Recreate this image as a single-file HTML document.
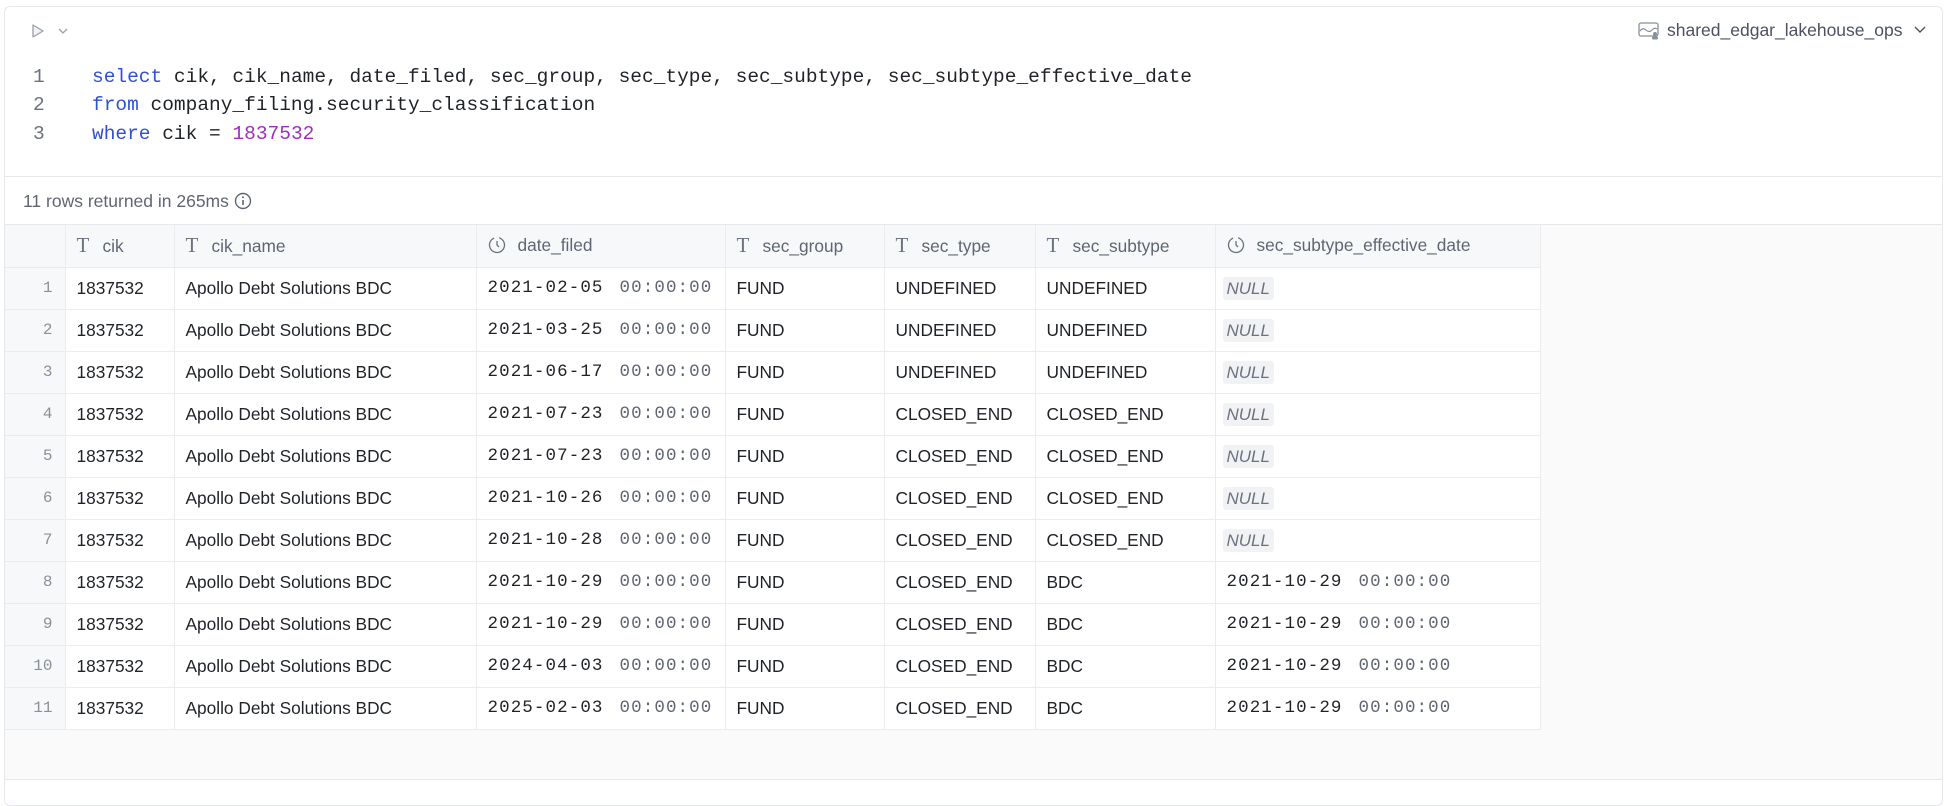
<!DOCTYPE html>
<html><head><meta charset="utf-8"><style>
*{box-sizing:border-box;margin:0;padding:0}
body{width:1946px;height:789px;background:#fff;font-family:"Liberation Sans",sans-serif;position:relative;overflow:hidden}
.card{position:absolute;left:4px;top:6px;width:1939px;height:800px;border:1px solid #e6e8eb;border-radius:6px;background:#fff}
.mono{font-family:"Liberation Mono",monospace}
.code{position:absolute;left:0;top:59px;font-size:19.5px;color:#1f2328}
.ln{position:absolute;left:28px;color:#6b7280;width:20px}
.cl{position:absolute;left:87px;white-space:pre}
.kw{color:#2f4fd6}.num{color:#a02ec0}
.sep{position:absolute;left:0;right:0;top:169px;border-top:1px solid #e6e8eb}
.info{position:absolute;left:18px;top:184px;font-size:17.5px;color:#5f6673}
.res{position:absolute;left:0;right:0;top:217px;height:556px;background:#fafafa;border-top:1px solid #e6e8eb;border-bottom:1px solid #e6e8eb}
table{position:absolute;left:0;top:0;border-collapse:collapse;background:#fff;font-size:17.3px;color:#1f2328}
td,th{border:1px solid #ececee;height:42px;padding:0 0 0 11px;text-align:left;white-space:nowrap;font-weight:normal}
th{background:#f7f8fa;color:#5f6673;height:42px;border-top:none}
tr td:first-child,tr th:first-child{border-left:none;background:#f7f8fa;color:#8a909a;text-align:right;padding:0 12px 0 0;font-family:"Liberation Mono",monospace;font-size:16px}
.t{font-family:"Liberation Serif",serif;font-size:21px;color:#6b7280;margin-right:14px;display:inline-block;width:12px}
.d{font-family:"Liberation Mono",monospace;font-size:17.5px;letter-spacing:1.1px}
.d span{color:#5f6673;margin-left:16px}
.null{background:#f1f2f4;color:#6b7280;font-style:italic;padding:2px 4px;border-radius:3px;font-size:17px;margin-left:-4px}
.clk{display:inline-block;vertical-align:-3px;margin-right:12px}
</style></head><body>
<div class="card">
<svg style="position:absolute;left:25px;top:16px" width="16" height="16" viewBox="0 0 16 16"><path d="M3 2 L13 8 L3 14 Z" fill="#f1f2f4" stroke="#9aa0a8" stroke-width="1.3" stroke-linejoin="round"/></svg>
<svg style="position:absolute;left:53px;top:21px" width="10" height="7" viewBox="0 0 10 7"><path d="M1 1 L5 5 L9 1" fill="none" stroke="#9aa0a8" stroke-width="1.3"/></svg>
<svg style="position:absolute;left:1633px;top:15px" width="22" height="18" viewBox="0 0 22 18"><rect x="1" y="1" width="19" height="13" rx="2" fill="none" stroke="#8a909a" stroke-width="1.3"/><path d="M2 9 Q5 5 8 8 T14 8 T19 7" fill="none" stroke="#8a909a" stroke-width="1.2"/><circle cx="17" cy="12" r="2" fill="#8a909a"/><rect x="14" y="14.5" width="6" height="3" rx="1.2" fill="#8a909a"/></svg>
<div style="position:absolute;left:1662px;top:13px;font-size:17.5px;color:#4b5260">shared_edgar_lakehouse_ops</div>
<svg style="position:absolute;left:1909px;top:19px" width="12" height="8" viewBox="0 0 12 8"><path d="M1 1 L6 6 L11 1" fill="none" stroke="#4b5260" stroke-width="1.4"/></svg>
<div class="code mono">
<div class="ln" style="top:0">1</div><div class="cl" style="top:0"><span class="kw">select</span> cik, cik_name, date_filed, sec_group, sec_type, sec_subtype, sec_subtype_effective_date</div>
<div class="ln" style="top:28px">2</div><div class="cl" style="top:28px"><span class="kw">from</span> company_filing.security_classification</div>
<div class="ln" style="top:57px">3</div><div class="cl" style="top:57px"><span class="kw">where</span> cik = <span class="num">1837532</span></div>
</div>
<div class="sep"></div>
<div class="info">11 rows returned in 265ms <svg style="vertical-align:-3px" width="18" height="18" viewBox="0 0 18 18"><circle cx="9" cy="9" r="7.5" fill="none" stroke="#5f6673" stroke-width="1.4"/><path d="M9 8v5" stroke="#5f6673" stroke-width="1.6"/><circle cx="9" cy="5.3" r="1" fill="#5f6673"/></svg></div>
<div class="res">
<table>
<colgroup><col style="width:60px"><col style="width:109px"><col style="width:302px"><col style="width:249px"><col style="width:159px"><col style="width:151px"><col style="width:180px"><col style="width:325px"></colgroup>
<tr><th></th><th><span class="t">T</span>cik</th><th><span class="t">T</span>cik_name</th><th><svg class="clk" width="18" height="18" viewBox="0 0 18 18"><circle cx="9" cy="9" r="7.5" fill="none" stroke="#6b7280" stroke-width="1.3" stroke-dasharray="40 5" transform="rotate(-60 9 9)"/><path d="M9 5v4l2 2" fill="none" stroke="#6b7280" stroke-width="1.3"/></svg>date_filed</th><th><span class="t">T</span>sec_group</th><th><span class="t">T</span>sec_type</th><th><span class="t">T</span>sec_subtype</th><th><svg class="clk" width="18" height="18" viewBox="0 0 18 18"><circle cx="9" cy="9" r="7.5" fill="none" stroke="#6b7280" stroke-width="1.3" stroke-dasharray="40 5" transform="rotate(-60 9 9)"/><path d="M9 5v4l2 2" fill="none" stroke="#6b7280" stroke-width="1.3"/></svg>sec_subtype_effective_date</th></tr>
<tr><td>1</td><td>1837532</td><td>Apollo Debt Solutions BDC</td><td class="d">2021-02-05<span>00:00:00</span></td><td>FUND</td><td>UNDEFINED</td><td>UNDEFINED</td><td><span class="null">NULL</span></td></tr>
<tr><td>2</td><td>1837532</td><td>Apollo Debt Solutions BDC</td><td class="d">2021-03-25<span>00:00:00</span></td><td>FUND</td><td>UNDEFINED</td><td>UNDEFINED</td><td><span class="null">NULL</span></td></tr>
<tr><td>3</td><td>1837532</td><td>Apollo Debt Solutions BDC</td><td class="d">2021-06-17<span>00:00:00</span></td><td>FUND</td><td>UNDEFINED</td><td>UNDEFINED</td><td><span class="null">NULL</span></td></tr>
<tr><td>4</td><td>1837532</td><td>Apollo Debt Solutions BDC</td><td class="d">2021-07-23<span>00:00:00</span></td><td>FUND</td><td>CLOSED_END</td><td>CLOSED_END</td><td><span class="null">NULL</span></td></tr>
<tr><td>5</td><td>1837532</td><td>Apollo Debt Solutions BDC</td><td class="d">2021-07-23<span>00:00:00</span></td><td>FUND</td><td>CLOSED_END</td><td>CLOSED_END</td><td><span class="null">NULL</span></td></tr>
<tr><td>6</td><td>1837532</td><td>Apollo Debt Solutions BDC</td><td class="d">2021-10-26<span>00:00:00</span></td><td>FUND</td><td>CLOSED_END</td><td>CLOSED_END</td><td><span class="null">NULL</span></td></tr>
<tr><td>7</td><td>1837532</td><td>Apollo Debt Solutions BDC</td><td class="d">2021-10-28<span>00:00:00</span></td><td>FUND</td><td>CLOSED_END</td><td>CLOSED_END</td><td><span class="null">NULL</span></td></tr>
<tr><td>8</td><td>1837532</td><td>Apollo Debt Solutions BDC</td><td class="d">2021-10-29<span>00:00:00</span></td><td>FUND</td><td>CLOSED_END</td><td>BDC</td><td class="d">2021-10-29<span>00:00:00</span></td></tr>
<tr><td>9</td><td>1837532</td><td>Apollo Debt Solutions BDC</td><td class="d">2021-10-29<span>00:00:00</span></td><td>FUND</td><td>CLOSED_END</td><td>BDC</td><td class="d">2021-10-29<span>00:00:00</span></td></tr>
<tr><td>10</td><td>1837532</td><td>Apollo Debt Solutions BDC</td><td class="d">2024-04-03<span>00:00:00</span></td><td>FUND</td><td>CLOSED_END</td><td>BDC</td><td class="d">2021-10-29<span>00:00:00</span></td></tr>
<tr><td>11</td><td>1837532</td><td>Apollo Debt Solutions BDC</td><td class="d">2025-02-03<span>00:00:00</span></td><td>FUND</td><td>CLOSED_END</td><td>BDC</td><td class="d">2021-10-29<span>00:00:00</span></td></tr>
</table>
</div>
</div>
</body></html>
